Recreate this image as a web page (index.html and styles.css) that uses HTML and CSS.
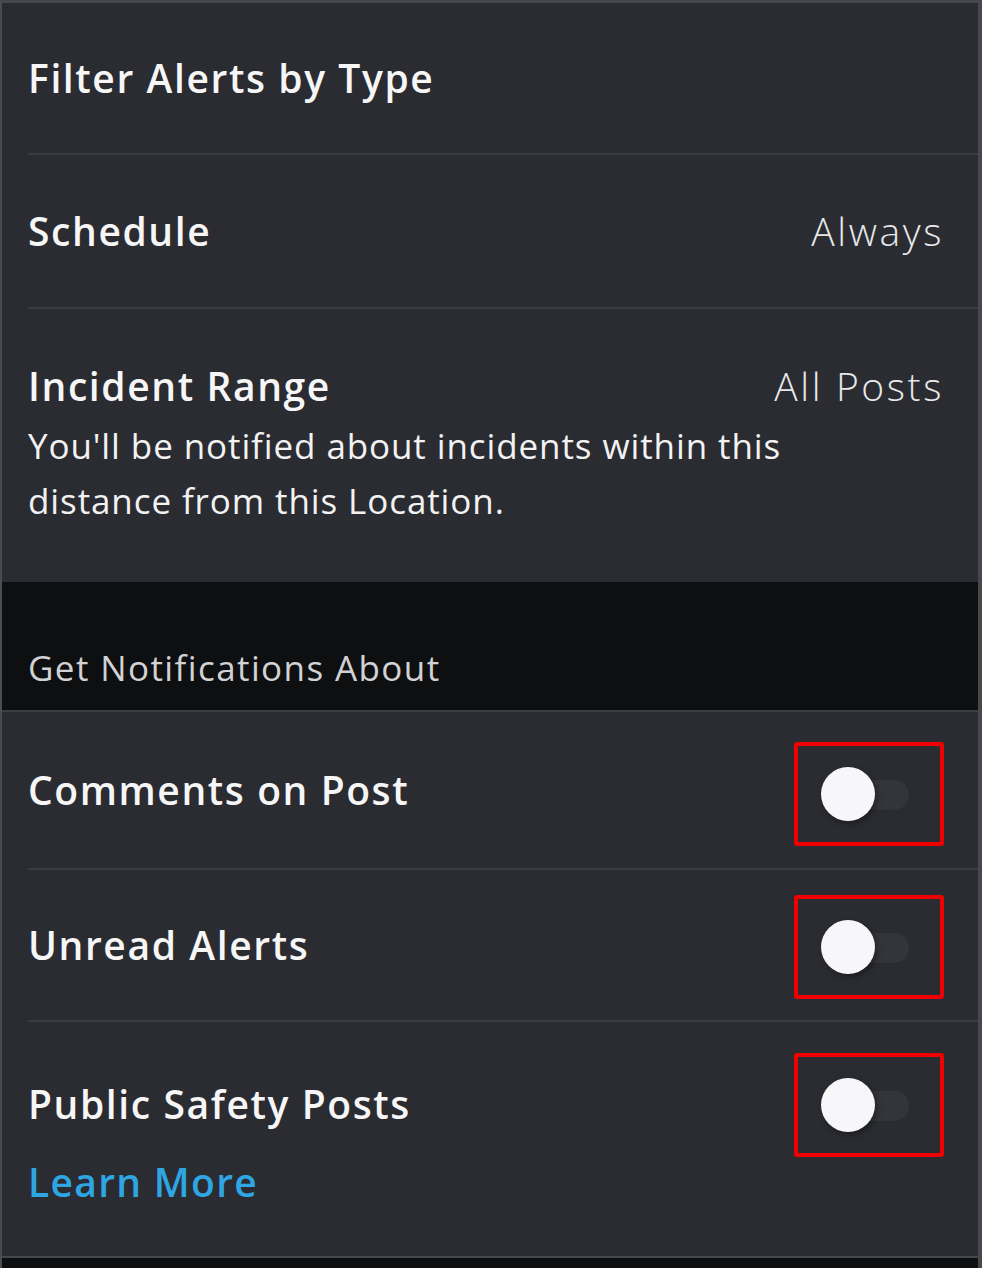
FILE: index.html
```html
<!DOCTYPE html>
<html lang="en">
<head>
<meta charset="utf-8">
<title>Alert Settings</title>
<link rel="stylesheet" href="styles.css">
</head>
<body>
<div class="screen">
  <section class="card card-top">
    <div class="row row-first">
      <span class="title">Filter Alerts by Type</span>
    </div>
    <div class="row row-single">
      <span class="title">Schedule</span>
      <span class="value">Always</span>
    </div>
    <div class="row row-range">
      <div class="range-head">
        <span class="title">Incident Range</span>
        <span class="value">All Posts</span>
      </div>
      <p class="desc">You'll be notified about incidents within this distance from this Location.</p>
    </div>
  </section>

  <div class="section-head">Get Notifications About</div>

  <section class="card card-bottom">
    <div class="row row-toggle">
      <span class="title">Comments on Post</span>
      <div class="toggle-box"><span class="toggle"><span class="track"></span><span class="knob"></span></span></div>
    </div>
    <div class="row row-toggle row-mid">
      <span class="title">Unread Alerts</span>
      <div class="toggle-box"><span class="toggle"><span class="track"></span><span class="knob"></span></span></div>
    </div>
    <div class="row row-toggle row-last">
      <div class="stack">
        <span class="title">Public Safety Posts</span>
        <a class="learn" href="#">Learn More</a>
      </div>
      <div class="toggle-box"><span class="toggle"><span class="track"></span><span class="knob"></span></span></div>
    </div>
  </section>
  <div class="foot"></div>
</div>
</body>
</html>
```

FILE: styles.css
```css
* { box-sizing: border-box; }
html, body { margin: 0; padding: 0; background: #0e0f10; }
body {
  font-family: "Open Sans", "Lato", sans-serif;
  color: #f4f4f5;
  width: 982px;
  height: 1268px;
  overflow: hidden;
}
.screen {
  width: 982px;
  height: 1268px;
  display: flex;
  flex-direction: column;
  border-left: 2px solid #4a4c51;
  border-right: 4px solid #46484c;
  border-top: 3px solid #46484c;
  background: #0e0f10;
}
.card {
  background: #2a2c31;
}
.row {
  margin-left: 26px;
  padding-right: 36px;
  display: flex;
  align-items: center;
  justify-content: space-between;
  border-bottom: 2px solid #3a3c41;
}
.row-first { height: 152px; }
.row-single { height: 154px; }
.row-range {
  display: block;
  border-bottom: none;
  height: 273px;
  padding-top: 55px;
}
.range-head {
  display: flex;
  justify-content: space-between;
  align-items: center;
}
.title {
  font-size: 39px;
  line-height: 44px;
  font-weight: 600;
  letter-spacing: 1.6px;
  color: #f6f6f7;
}
.value {
  font-size: 39px;
  line-height: 44px;
  font-weight: 300;
  color: #e8e8ea;
  letter-spacing: 2.6px;
  margin-right: -2px;
}
.desc {
  margin: 10px 0 0;
  font-size: 35px;
  line-height: 55px;
  font-weight: 400;
  color: #f2f2f3;
  width: 800px;
  letter-spacing: 0.9px;
}
.section-head {
  height: 130px;
  padding: 64px 0 0 26px;
  font-size: 35px;
  line-height: 44px;
  color: #d2d2d4;
  font-weight: 400;
  letter-spacing: 1.4px;
  border-bottom: 2px solid #3a3c40;
}
.row-toggle {
  height: 158px;
  padding-right: 34px;
}
.row-toggle .toggle-box { margin-top: 8px; }
.row-mid { height: 152px; }
.row-mid .toggle-box { margin-top: 4px; }
.row-last {
  height: 234px;
  align-items: flex-start;
  border-bottom: none;
  padding-top: 31px;
}
.row-last .toggle-box { margin-top: 0; }
.stack {
  display: flex;
  flex-direction: column;
  padding-top: 29px;
}
.learn {
  margin-top: 34px;
  font-size: 39px;
  line-height: 44px;
  font-weight: 600;
  color: #2ea6e4;
  text-decoration: none;
  letter-spacing: 1.3px;
}
.toggle-box {
  width: 150px;
  height: 104px;
  border: 4px solid #f00000;
  border-radius: 3px;
  display: flex;
  align-items: center;
  padding-left: 23px;
}
.toggle {
  position: relative;
  width: 92px;
  height: 54px;
  display: block;
}
.track {
  position: absolute;
  left: 26px;
  top: 13px;
  width: 62px;
  height: 30px;
  border-radius: 15px;
  background: #33353a;
}
.knob {
  position: absolute;
  left: 0;
  top: 0;
  width: 54px;
  height: 54px;
  border-radius: 50%;
  background: #f7f7fa;
  box-shadow: 2px 3px 6px rgba(0, 0, 0, 0.35);
}
.foot {
  flex: 1;
  border-top: 2px solid #46484c;
  background: #0e0f10;
}
```
